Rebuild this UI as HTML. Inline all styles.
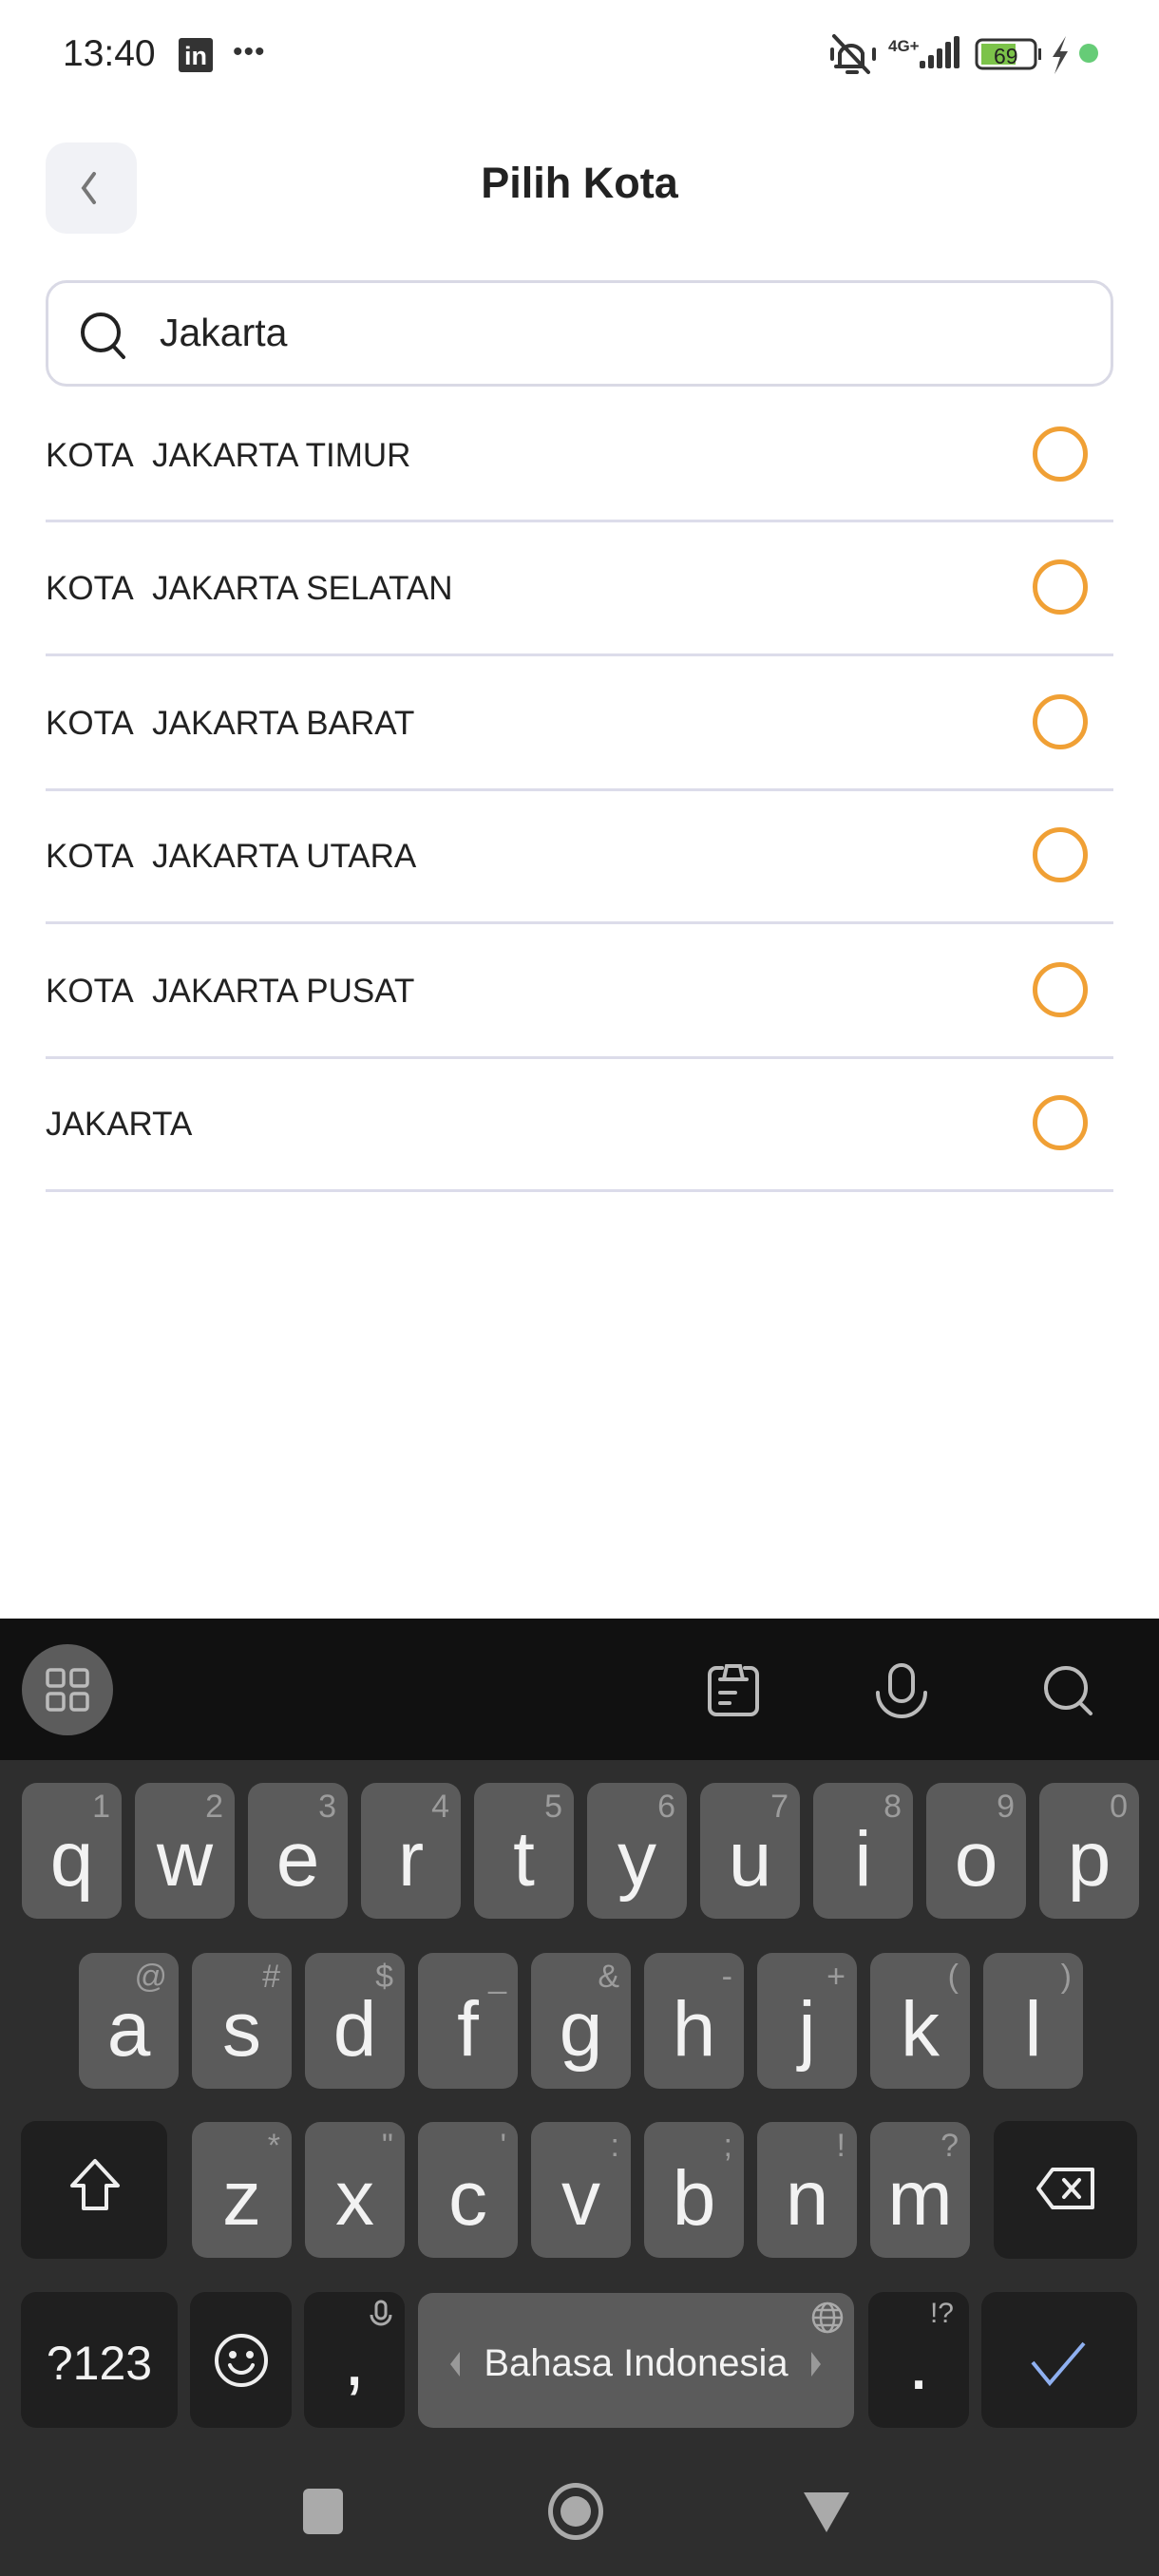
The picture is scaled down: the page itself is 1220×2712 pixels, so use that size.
<!DOCTYPE html>
<html><head><meta charset="utf-8"><style>
*{margin:0;padding:0;box-sizing:border-box}
body{width:1220px;height:2712px;background:#fff;position:relative;overflow:hidden;font-family:"Liberation Sans",sans-serif}
.a{position:absolute}
.row{position:absolute;left:48px;font-size:35px;color:#222;line-height:1}
.sep{position:absolute;left:48px;width:1124px;height:3px;background:#dcdcea}
.rad{position:absolute;left:1087px;width:58px;height:58px;border:5px solid #f0a035;border-radius:50%}
.k{position:absolute;width:105px;height:143px;background:#5b5b5b;border-radius:16px;color:#f2f2f2}
.k b{position:absolute;left:0;right:0;top:40px;text-align:center;font-weight:normal;font-size:82px;line-height:1}
.k i{position:absolute;right:12px;top:8px;font-style:normal;font-size:34px;color:#9c9c9c;line-height:1}
.d{background:#1f1f1f}
</style></head><body>
<!-- status bar -->
<div class="a" style="left:66px;top:37px;font-size:39px;color:#222;line-height:1">13:40</div>
<div class="a" style="left:188px;top:40px;width:36px;height:36px;background:#333;border-radius:3px;color:#fff;font-size:27px;font-weight:bold;line-height:38px;text-align:center">in</div>
<div class="a" style="left:245px;top:38px;font-size:30px;color:#333;letter-spacing:1px">•••</div>
<svg class="a" style="left:870px;top:34px" width="300" height="50" viewBox="0 0 300 50">
<g stroke="#333" stroke-width="4" fill="none" stroke-linecap="round"><path d="M14 36 V22 a13 13 0 0 1 24 0 V36 H10 M22 42 h10 M8 4 L44 42"/><path d="M6 18v10M50 18v10"/></g>
<text x="65" y="20" font-family="Liberation Sans" font-weight="bold" font-size="17" fill="#333">4G+</text>
<g fill="#333"><rect x="98" y="30" width="6" height="8" rx="2"/><rect x="107" y="24" width="6" height="14" rx="2"/><rect x="116" y="17" width="6" height="21" rx="2"/><rect x="125" y="10" width="6" height="28" rx="2"/><rect x="134" y="4" width="6" height="34" rx="2"/></g>
<rect x="158" y="8" width="62" height="30" rx="6" fill="none" stroke="#333" stroke-width="3"/>
<rect x="163" y="12" width="36" height="22" fill="#7cc34a"/>
<rect x="223" y="17" width="3" height="12" fill="#333"/>
<text x="176" y="33" font-family="Liberation Sans" font-size="23" fill="#222">69</text>
<path d="M252 4 L238 26 h8 l-6 18 l14 -24 h-8z" fill="#444"/>
<circle cx="276" cy="22" r="10" fill="#66cc77"/>
</svg>
<!-- header -->
<div class="a" style="left:48px;top:150px;width:96px;height:96px;background:#f1f2f6;border-radius:22px"></div>
<svg class="a" style="left:80px;top:180px" width="30" height="36"><path d="M19 3 L8 18 L19 33" stroke="#777" stroke-width="4" fill="none" stroke-linecap="round"/></svg>
<div class="a" style="left:0;width:1220px;top:170px;text-align:center;font-size:45px;font-weight:bold;color:#222;line-height:1">Pilih Kota</div>
<!-- search -->
<div class="a" style="left:48px;top:295px;width:1124px;height:112px;border:3px solid #d9d9e5;border-radius:22px"></div>
<svg class="a" style="left:80px;top:324px" width="56" height="56"><circle cx="26" cy="26" r="19" stroke="#222" stroke-width="4" fill="none"/><path d="M39 40 L50 52" stroke="#222" stroke-width="4" stroke-linecap="round"/></svg>
<div class="a" style="left:168px;top:330px;font-size:41px;color:#222;line-height:1">Jakarta</div>
<!-- list -->
<div class="row" style="top:462px">KOTA&nbsp; JAKARTA TIMUR</div><div class="rad" style="top:449px"></div><div class="sep" style="top:547px"></div>
<div class="row" style="top:602px">KOTA&nbsp; JAKARTA SELATAN</div><div class="rad" style="top:589px"></div><div class="sep" style="top:688px"></div>
<div class="row" style="top:744px">KOTA&nbsp; JAKARTA BARAT</div><div class="rad" style="top:731px"></div><div class="sep" style="top:830px"></div>
<div class="row" style="top:884px">KOTA&nbsp; JAKARTA UTARA</div><div class="rad" style="top:871px"></div><div class="sep" style="top:970px"></div>
<div class="row" style="top:1026px">KOTA&nbsp; JAKARTA PUSAT</div><div class="rad" style="top:1013px"></div><div class="sep" style="top:1112px"></div>
<div class="row" style="top:1166px">JAKARTA</div><div class="rad" style="top:1153px"></div><div class="sep" style="top:1252px"></div>
<!-- keyboard -->
<div class="a" style="left:0;top:1704px;width:1220px;height:1008px;background:#2e2e2e"></div>
<div class="a" style="left:0;top:1704px;width:1220px;height:149px;background:#111"></div>
<div class="a" style="left:23px;top:1731px;width:96px;height:96px;border-radius:50%;background:#5c5c5c"></div>
<svg class="a" style="left:47px;top:1755px" width="48" height="48" fill="none" stroke="#bbb" stroke-width="3.5"><rect x="3" y="3" width="17" height="17" rx="3"/><rect x="28" y="3" width="17" height="17" rx="3"/><rect x="3" y="28" width="17" height="17" rx="3"/><rect x="28" y="28" width="17" height="17" rx="3"/></svg>
<svg class="a" style="left:744px;top:1748px" width="56" height="62" fill="none" stroke="#bbb" stroke-width="4" stroke-linecap="round"><path d="M16 8 H10 a7 7 0 0 0 -7 7 V50 a7 7 0 0 0 7 7 H46 a7 7 0 0 0 7 -7 V15 a7 7 0 0 0 -7 -7 H40"/><path d="M14 20 H42 M18 20 L21 6 H35 L38 20 M14 34 H30 M14 45 H24"/></svg>
<svg class="a" style="left:920px;top:1750px" width="58" height="60" fill="none" stroke="#bbb" stroke-width="4" stroke-linecap="round"><rect x="17" y="3" width="24" height="38" rx="12"/><path d="M4 32 a25 25 0 0 0 50 0"/></svg>
<svg class="a" style="left:1098px;top:1753px" width="58" height="58" fill="none" stroke="#bbb" stroke-width="4" stroke-linecap="round"><circle cx="24" cy="24" r="21"/><path d="M39 40 L50 51"/></svg>
<!-- row1 -->
<div class="k" style="left:23px;top:1877px"><i>1</i><b>q</b></div>
<div class="k" style="left:142px;top:1877px"><i>2</i><b>w</b></div>
<div class="k" style="left:261px;top:1877px"><i>3</i><b>e</b></div>
<div class="k" style="left:380px;top:1877px"><i>4</i><b>r</b></div>
<div class="k" style="left:499px;top:1877px"><i>5</i><b>t</b></div>
<div class="k" style="left:618px;top:1877px"><i>6</i><b>y</b></div>
<div class="k" style="left:737px;top:1877px"><i>7</i><b>u</b></div>
<div class="k" style="left:856px;top:1877px"><i>8</i><b>i</b></div>
<div class="k" style="left:975px;top:1877px"><i>9</i><b>o</b></div>
<div class="k" style="left:1094px;top:1877px"><i>0</i><b>p</b></div>
<!-- row2 -->
<div class="k" style="left:83px;top:2056px"><i>@</i><b>a</b></div>
<div class="k" style="left:202px;top:2056px"><i>#</i><b>s</b></div>
<div class="k" style="left:321px;top:2056px"><i>$</i><b>d</b></div>
<div class="k" style="left:440px;top:2056px"><i>_</i><b>f</b></div>
<div class="k" style="left:559px;top:2056px"><i>&amp;</i><b>g</b></div>
<div class="k" style="left:678px;top:2056px"><i>-</i><b>h</b></div>
<div class="k" style="left:797px;top:2056px"><i>+</i><b>j</b></div>
<div class="k" style="left:916px;top:2056px"><i>(</i><b>k</b></div>
<div class="k" style="left:1035px;top:2056px"><i>)</i><b>l</b></div>
<!-- row3 -->
<div class="k d" style="left:22px;top:2233px;width:154px;height:145px"><svg class="a" style="left:50px;top:38px" width="56" height="60"><path d="M28 4 L52 30 H40 V54 H16 V30 H4 Z" fill="none" stroke="#eee" stroke-width="4" stroke-linejoin="round"/></svg></div>
<div class="k" style="left:202px;top:2234px"><i>*</i><b>z</b></div>
<div class="k" style="left:321px;top:2234px"><i>"</i><b>x</b></div>
<div class="k" style="left:440px;top:2234px"><i>'</i><b>c</b></div>
<div class="k" style="left:559px;top:2234px"><i>:</i><b>v</b></div>
<div class="k" style="left:678px;top:2234px"><i>;</i><b>b</b></div>
<div class="k" style="left:797px;top:2234px"><i>!</i><b>n</b></div>
<div class="k" style="left:916px;top:2234px"><i>?</i><b>m</b></div>
<div class="k d" style="left:1046px;top:2233px;width:151px;height:145px"><svg class="a" style="left:44px;top:48px" width="64" height="46" fill="none" stroke="#eee" stroke-width="4" stroke-linejoin="round"><path d="M18 3 H60 V43 H18 L3 23 Z"/><path d="M30 14 L46 32 M46 14 L30 32" stroke-linecap="round"/></svg></div>
<!-- row4 -->
<div class="k d" style="left:22px;top:2413px;width:165px;height:143px"><div class="a" style="left:0;right:0;top:50px;text-align:center;font-size:50px;line-height:1">?123</div></div>
<div class="k d" style="left:200px;top:2413px;width:107px;height:143px"><svg class="a" style="left:24px;top:42px" width="60" height="60" fill="none" stroke="#eee" stroke-width="4"><circle cx="30" cy="30" r="26"/><circle cx="21" cy="24" r="2" fill="#eee"/><circle cx="39" cy="24" r="2" fill="#eee"/><path d="M18 35 a13 13 0 0 0 24 0" stroke-linecap="round"/></svg></div>
<div class="k d" style="left:320px;top:2413px;width:106px;height:143px"><b style="top:30px">,</b><svg class="a" style="left:68px;top:8px" width="26" height="34" fill="none" stroke="#aaa" stroke-width="3"><rect x="8" y="2" width="10" height="18" rx="5"/><path d="M3 16 a10 10 0 0 0 20 0"/></svg></div>
<div class="k" style="left:440px;top:2414px;width:459px;height:142px"><div class="a" style="left:0;right:0;top:54px;text-align:center;font-size:40px;line-height:1">Bahasa Indonesia</div><svg class="a" style="left:32px;top:60px" width="14" height="30"><path d="M12 2 L2 15 L12 28Z" fill="#999"/></svg><svg class="a" style="left:412px;top:60px" width="14" height="30"><path d="M2 2 L12 15 L2 28Z" fill="#999"/></svg><svg class="a" style="left:413px;top:8px" width="36" height="36" fill="none" stroke="#aaa" stroke-width="2.5"><circle cx="18" cy="18" r="15"/><ellipse cx="18" cy="18" rx="7" ry="15"/><path d="M3 18 H33 M6 10 H30 M6 26 H30"/></svg></div>
<div class="k d" style="left:914px;top:2413px;width:106px;height:143px"><b style="top:34px">.</b><div class="a" style="right:16px;top:8px;font-size:30px;color:#aaa;line-height:1">!?</div></div>
<div class="k d" style="left:1033px;top:2413px;width:164px;height:143px"><svg class="a" style="left:50px;top:50px" width="64" height="50"><path d="M4 24 L22 46 L58 4" fill="none" stroke="#8fb0f0" stroke-width="4"/></svg></div>
<!-- nav -->
<div class="a" style="left:319px;top:2620px;width:42px;height:48px;background:#aaa;border-radius:6px"></div>
<div class="a" style="left:577px;top:2614px;width:58px;height:60px;border:5px solid #aaa;border-radius:50%"></div>
<div class="a" style="left:590px;top:2628px;width:32px;height:32px;background:#aaa;border-radius:50%"></div>
<svg class="a" style="left:844px;top:2622px" width="52" height="46"><path d="M2 2 H50 L26 44Z" fill="#aaa"/></svg>
</body></html>
